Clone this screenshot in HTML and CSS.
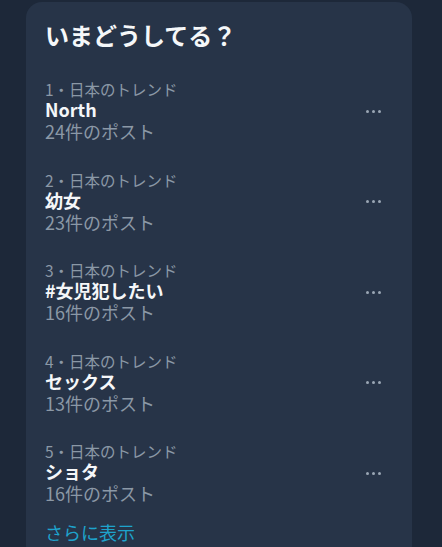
FILE: index.html
```
<!DOCTYPE html>
<html lang="ja">
<head>
  <meta charset="UTF-8">
  <title>いまどうしてる？</title>
  <link rel="stylesheet" href="styles.css">
</head>
<body>
  <div class="card">
    <h2>いまどうしてる？</h2>

    <div class="trend">
      <div class="info">
        <div class="cat">1・日本のトレンド</div>
        <div class="name">North</div>
        <div class="count">24件のポスト</div>
      </div>
      <div class="more"><span></span><span></span><span></span></div>
    </div>

    <div class="trend">
      <div class="info">
        <div class="cat">2・日本のトレンド</div>
        <div class="name">幼女</div>
        <div class="count">23件のポスト</div>
      </div>
      <div class="more"><span></span><span></span><span></span></div>
    </div>

    <div class="trend">
      <div class="info">
        <div class="cat">3・日本のトレンド</div>
        <div class="name">#女児犯したい</div>
        <div class="count">16件のポスト</div>
      </div>
      <div class="more"><span></span><span></span><span></span></div>
    </div>

    <div class="trend">
      <div class="info">
        <div class="cat">4・日本のトレンド</div>
        <div class="name">セックス</div>
        <div class="count">13件のポスト</div>
      </div>
      <div class="more"><span></span><span></span><span></span></div>
    </div>

    <div class="trend">
      <div class="info">
        <div class="cat">5・日本のトレンド</div>
        <div class="name">ショタ</div>
        <div class="count">16件のポスト</div>
      </div>
      <div class="more"><span></span><span></span><span></span></div>
    </div>

    <a class="show-more" href="#">さらに表示</a>
  </div>
</body>
</html>
```
FILE: styles.css
```
body {
  margin: 0;
  background: #1d2839;
  font-family: "Noto Sans CJK JP", "Noto Sans", sans-serif;
  color: #f5f7f9;
}
.card {
  margin: 2px 0 0 26px;
  width: 386px;
  box-sizing: border-box;
  background: #273448;
  border-radius: 16px;
  padding: 17px 29px 10px 19px;
  height: 560px;
}
h2 {
  margin: 0 0 15px;
  font-size: 24px;
  line-height: 32px;
  font-weight: 700;
}
.trend {
  display: flex;
  align-items: center;
  justify-content: space-between;
  padding: 14px 0 14.5px;
}
.cat {
  font-size: 15.5px;
  line-height: 19px;
  color: #8b98a6;
}
.name {
  font-size: 18px;
  line-height: 21px;
  font-weight: 700;
}
.count {
  font-size: 18px;
  line-height: 22px;
  color: #8b98a6;
}
.more {
  display: flex;
  gap: 3px;
  width: 20px;
  justify-content: center;
}
.more span {
  width: 3px;
  height: 3px;
  border-radius: 50%;
  background: #9aa6b4;
}
.show-more {
  display: block;
  margin-top: 1px;
  font-size: 18px;
  line-height: 24px;
  color: #1ea3cc;
  text-decoration: none;
}
```
